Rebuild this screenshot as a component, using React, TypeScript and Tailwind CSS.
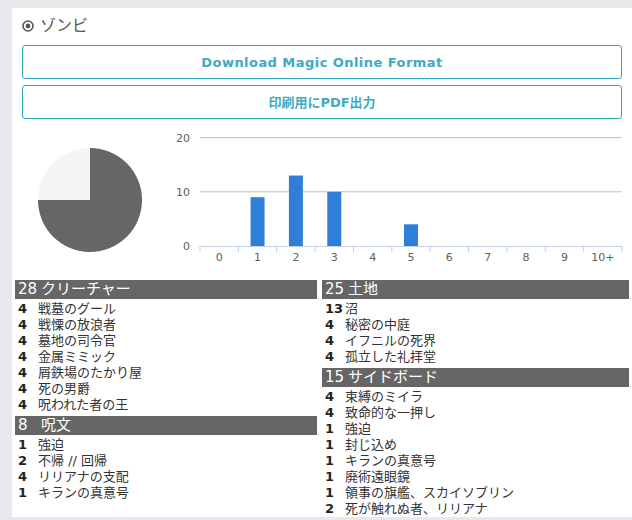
const font = { fontFamily: '"DejaVu Sans", "Noto Sans CJK JP", sans-serif' };

type Card = [number, string];
type Section = { count: number; title: string; cards: Card[] };

const left: Section[] = [
  {
    count: 28,
    title: 'クリーチャー',
    cards: [
      [4, '戦墓のグール'],
      [4, '戦慄の放浪者'],
      [4, '墓地の司令官'],
      [4, '金属ミミック'],
      [4, '屑鉄場のたかり屋'],
      [4, '死の男爵'],
      [4, '呪われた者の王'],
    ],
  },
  {
    count: 8,
    title: '呪文',
    cards: [
      [1, '強迫'],
      [2, '不帰 // 回帰'],
      [4, 'リリアナの支配'],
      [1, 'キランの真意号'],
    ],
  },
];

const right: Section[] = [
  {
    count: 25,
    title: '土地',
    cards: [
      [13, '沼'],
      [4, '秘密の中庭'],
      [4, 'イフニルの死界'],
      [4, '孤立した礼拝堂'],
    ],
  },
  {
    count: 15,
    title: 'サイドボード',
    cards: [
      [4, '束縛のミイラ'],
      [4, '致命的な一押し'],
      [1, '強迫'],
      [1, '封じ込め'],
      [1, 'キランの真意号'],
      [1, '廃術遠眼鏡'],
      [1, '領事の旗艦、スカイソブリン'],
      [2, '死が触れぬ者、リリアナ'],
    ],
  },
];

const bars = [0, 9, 13, 10, 0, 4, 0, 0, 0, 0, 0];
const labels = ['0', '1', '2', '3', '4', '5', '6', '7', '8', '9', '10+'];

function Pie() {
  const cx = 78, cy = 80, r = 52;
  return (
    <svg width="160" height="150" className="shrink-0">
      <path d={`M${cx},${cy} L${cx - r},${cy} A${r},${r} 0 0 1 ${cx},${cy - r} Z`} fill="#f5f5f5" />
      <path d={`M${cx},${cy} L${cx},${cy - r} A${r},${r} 0 1 1 ${cx - r},${cy} Z`} fill="#666666" />
    </svg>
  );
}

function Bars() {
  const x0 = 28, x1 = 450, y0 = 126, unit = 5.42;
  const w = (x1 - x0) / 11;
  return (
    <svg width="460" height="150" className="shrink-0">
      {[0, 10, 20].map(v => (
        <g key={v}>
          {v > 0 && <line x1={x0} x2={x1} y1={y0 - v * unit} y2={y0 - v * unit} stroke="#c0c0c0" strokeWidth="1" />}
          <text x={18} y={y0 - v * unit + 4} textAnchor="end" fontSize="11" fill="#606060" style={font}>{v}</text>
        </g>
      ))}
      <line x1={x0} x2={x1} y1={y0 + 0.5} y2={y0 + 0.5} stroke="#c0d0e0" strokeWidth="1" />
      {Array.from({ length: 12 }).map((_, k) => (
        <line key={k} x1={x0 + k * w} x2={x0 + k * w} y1={y0} y2={y0 + 6} stroke="#c0d0e0" strokeWidth="1" />
      ))}
      {bars.map((v, i) =>
        v > 0 ? (
          <rect key={i} x={x0 + i * w + w / 2 - 7} y={y0 - v * unit} width="14" height={v * unit} fill="#2f7ed8" />
        ) : null
      )}
      {labels.map((l, i) => (
        <text key={l} x={x0 + i * w + w / 2} y={141} textAnchor="middle" fontSize="11" fill="#606060" style={font}>{l}</text>
      ))}
    </svg>
  );
}

function Column({ sections, className }: { sections: Section[]; className: string }) {
  return (
    <div className={`${className} flex flex-col gap-[3px]`}>
      {sections.map(s => (
        <div key={s.title}>
          <div className="h-[19px] bg-[#666666] text-white text-[15px] leading-[19px] pl-[3px] flex mb-[2px]">
            <span className="w-[23px] shrink-0">{s.count}</span>
            <span>{s.title}</span>
          </div>
          {s.cards.map(([n, name], i) => (
            <div key={i} className="flex h-[16px] text-[13px] leading-[16px] pl-[3px]">
              <span className="w-[20px] shrink-0 font-bold text-[#222222]">{n}</span>
              <span className="text-[#333333] whitespace-nowrap">{name}</span>
            </div>
          ))}
        </div>
      ))}
    </div>
  );
}

export default function App() {
  return (
    <div className="h-[520px] bg-[#e8e9ed] pl-[12px] pt-[8px]" style={font}>
      <div className="bg-white h-[509px] flex flex-col">
        <div className="flex items-center h-[22px] mt-[7px] ml-[10px] gap-[6px] text-[#555555]">
          <svg width="12" height="12" viewBox="0 0 12 12">
            <circle cx="6" cy="6" r="5" fill="none" stroke="#555555" strokeWidth="1.6" />
            <circle cx="6" cy="6" r="2.4" fill="#555555" />
          </svg>
          <span className="text-[16px] leading-[22px]">ゾンビ</span>
        </div>
        <div className="mx-[10px] mt-[8px] flex flex-col gap-[6px]">
          <button className="h-[34px] pt-[2px] border border-[#2fa9c0] rounded-[3px] text-[#40a9c3] text-[13px] font-bold tracking-[0.45px]">
            Download Magic Online Format
          </button>
          <button className="h-[34px] pt-[2px] border border-[#2fa9c0] rounded-[3px] text-[#40a9c3] text-[13px] font-bold">
            印刷用にPDF出力
          </button>
        </div>
        <div className="flex mt-[1px]">
          <Pie />
          <Bars />
        </div>
        <div className="flex gap-[5px] px-[3px] mt-[10px]">
          <Column sections={left} className="w-[302px]" />
          <Column sections={right} className="flex-1" />
        </div>
      </div>
    </div>
  );
}
